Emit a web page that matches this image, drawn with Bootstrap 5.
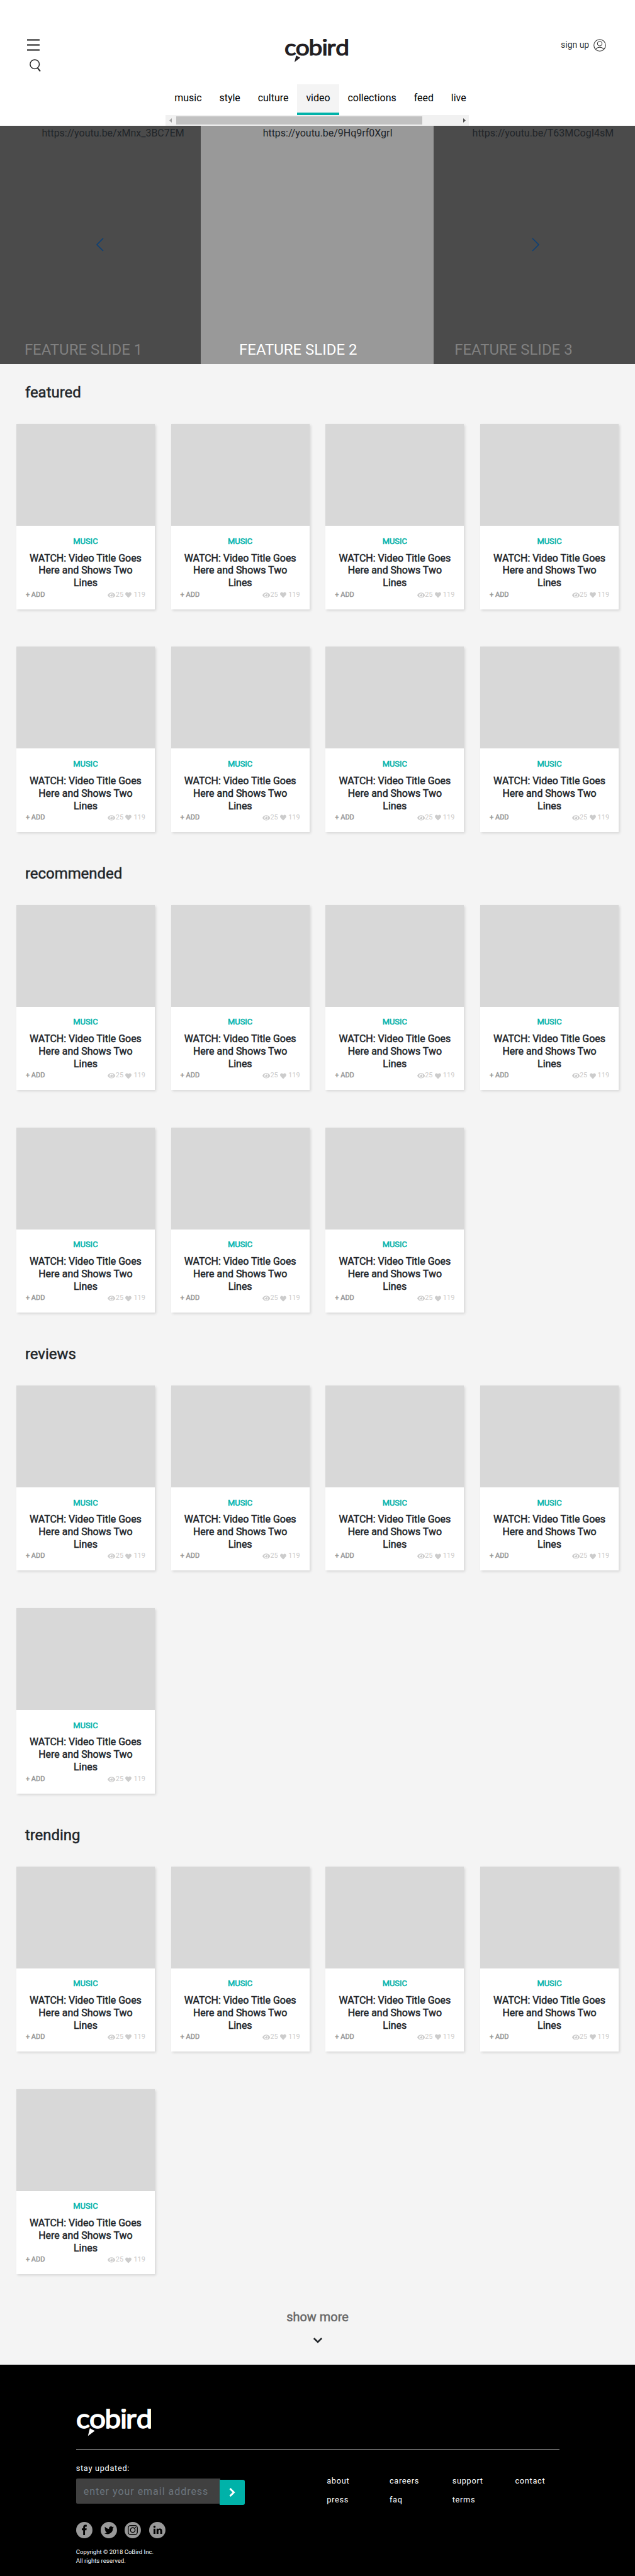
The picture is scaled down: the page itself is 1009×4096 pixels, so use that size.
<!DOCTYPE html>
<html lang="en">
<head>
<meta charset="utf-8">
<meta name="viewport" content="width=device-width, initial-scale=1">
<title>cobird - video</title>
<link href="https://cdn.jsdelivr.net/npm/bootstrap@5.3.0/dist/css/bootstrap.min.css" rel="stylesheet">
<style>
  html { overflow: hidden; background: #000; }
  body { zoom: .99757; font-family: Roboto, sans-serif; color: #212529; background: #f4f4f4; height: 4106px; overflow: hidden; }
  svg { display: block; flex: none; }
  .site-head { height: 200px; }
  .head-row { height: 134px; padding: 62px 46px 0 43px; }
  .head-side { width: 200px; }
  .search-ico { margin: 12px 0 0 4px; }
  .signup { font-size: 14px; line-height: 18px; color: #333; gap: 7px; }
  .brand { font-family: Lato, sans-serif; font-weight: 400; font-size: 35.5px; stroke-width: 1.2; stroke-linejoin: round; }
  .tabs-strip { width: 483px; margin-left: 264px; }
  .tabs-strip .nav-link { color: #000; font-size: 16px; line-height: 20px; padding: 12px 14px; height: 49px; border-radius: 0; }
  .tabs-strip .nav-link.active { background: #f4f4f4; border-bottom: 5px solid #00b2a9; }
  .fake-scroll { height: 17px; background: #f1f1f1; }
  .fake-thumb { width: 392px; height: 13px; background: #c1c1c1; }
  .slides { height: 380px; background: #4b4b4b; }
  .slide-a { width: 320px; } .slide-b { width: 371px; background: #999; } .slide-c { width: 320px; }
  .slide-url { font-size: 16px; line-height: 24px; color: #212529; }
  .slide-a .slide-url { padding-left: 40px; } .slide-b .slide-url { padding-left: 33px; } .slide-c .slide-url { padding-left: 28px; }
  .slide-name { font-size: 24px; line-height: 28px; color: #808080; margin-bottom: 8px; }
  .slide-a .slide-name { padding-left: 39px; } .slide-b .slide-name { padding-left: 61px; color: #fff; } .slide-c .slide-name { padding-left: 33px; }
  .arrow { margin-top: 12px; }
  .slide-a .arrow { margin-left: 152px; } .slide-c .arrow { margin-left: 155px; }
  .shelf { padding: 33px 26px 20.33px; }
  .heavy { font-weight: 400; -webkit-text-stroke: .5px currentColor; }
  .shelf h2 { font-size: 24px; line-height: 28px; margin: 0 0 35px 14px; }
  .tiles { display: grid; grid-template-columns: repeat(4, 220.5px); column-gap: 25.83px; row-gap: 60px; }
  .tile { height: 295px; background: #fff; box-shadow: 2px 2px 4px rgba(0,0,0,.12); }
  .tile-pic { height: 162.4px; background: #d8d8d8; }
  .tile-body { padding: 16.6px 15px 0; }
  .tile-tag { font-size: 13px; line-height: 16px; color: #00b2a9; margin-bottom: 8.7px; }
  .tile-title { font-size: 16px; line-height: 20px; margin: 0; }
  .tile-foot { font-size: 11px; line-height: 13px; margin-top: 2.3px; color: #ccc; }
  .tile-add { color: #999; }
  .tile-heart { margin: 0 3px 0 3.4px; }
  .show-more { padding-top: 36.5px; height: 124px; }
  .show-more span { font-size: 20px; line-height: 24px; color: #666; }
  .show-more svg { margin-top: 19px; }
  .site-foot { background: #000; color: #fff; padding: 70px 120px 0 121px; height: 337px; }
  .foot-rule { height: 1px; background: #999; margin: 19px 0 22px; }
  .foot-left { width: 399.5px; }
  .stay { font-size: 12.8px; line-height: 16px; letter-spacing: .7px; margin-bottom: 9px; }
  .mail-box { width: 230px; height: 40px; background: #404040; border: 0; border-radius: 2px 0 0 2px; padding: 0 12px; color: #fff; letter-spacing: 1px; font-size: 16px; }
  .mail-box::placeholder { color: #6c757d; opacity: 1; }
  .mail-go { width: 40px; height: 40px; background: #00b2a9; border: 0; border-radius: 0 3px 3px 0; padding: 0; margin: 2px 0 0 -1px; }
  .socials { gap: 13px; margin-top: 27px; }
  .legal { font-size: 9.6px; line-height: 14px; margin-top: 15px; }
  .foot-links { display: grid; grid-template-columns: repeat(4, 100px); grid-auto-rows: 30px; padding-top: 13.6px; font-size: 12.8px; line-height: 30px; letter-spacing: .7px; width: 370px; }
  .foot-links a { color: #fff; text-decoration: none; }
</style>
<script src="https://cdn.jsdelivr.net/npm/bootstrap@5.3.0/dist/js/bootstrap.bundle.min.js"></script>
</head>
<body>
<svg width="0" height="0" class="position-absolute" aria-hidden="true">
  <symbol id="eye" viewBox="0 0 576 512">
    <path fill="currentColor" d="M572.500 241.400C518.300 135.600 410.900 64 288 64S57.700 135.600 3.500 241.400a32.400 32.400 0 0 0 0 29.200C57.700 376.400 165.100 448 288 448s230.300-71.600 284.500-177.400a32.400 32.400 0 0 0 0-29.200zM288 400a144 144 0 1 1 144-144 143.900 143.900 0 0 1-144 144zm0-240a95.300 95.300 0 0 0-25.300 3.800 47.900 47.900 0 0 1-66.900 66.900A95.800 95.800 0 1 0 288 160z"/>
  </symbol>
  <symbol id="heart" viewBox="0 0 512 512">
    <path fill="currentColor" d="M462.300 62.600C407.500 15.900 326 24.300 275.700 76.200L256 96.500l-19.700-20.300C186.100 24.300 104.500 15.900 49.700 62.600c-62.800 53.600-66.100 149.800-9.900 207.900l193.500 199.800c12.500 12.900 32.800 12.900 45.300 0l193.500-199.800c56.300-58.100 53-154.300-9.800-207.900z"/>
  </symbol>
</svg>

<header class="site-head bg-white">
  <div class="head-row d-flex justify-content-between align-items-start">
    <div class="head-side">
      <svg width="20" height="20" viewBox="0 0 20 20" stroke="#111" stroke-width="2"><path d="M0 1.500h20M0 9.500h20M0 17.500h20"/></svg>
      <svg class="search-ico" width="19" height="22" viewBox="0 0 19 22" fill="none" stroke="#222" stroke-width="1.500"><circle cx="8.200" cy="8.200" r="7.300"/><path d="M12.600 14l4.400 5.400" stroke-width="2"/></svg>
    </div>
    <svg width="102" height="38" viewBox="-1 0 102 38" color="#231f24">
      <text class="brand" transform="scale(1.1 1)" x="-1 15.300 34.300 53.400 60.300 73.200" y="26.400" fill="currentColor" stroke="currentColor">cobird</text>
      <path d="M17.600 26.200 24.200 29.900 15 36.800Z" fill="currentColor"/>
    </svg>
    <div class="head-side signup d-flex justify-content-end align-items-center">
      <span>sign up</span>
      <svg width="20" height="20" viewBox="0 0 20 20" fill="none" stroke="#333" stroke-width="1.100"><circle cx="10" cy="10" r="9.300"/><circle cx="10" cy="7.400" r="3.600"/><path d="M3.800 16.600C5.500 12.100 14.500 12.100 16.200 16.600"/></svg>
    </div>
  </div>
  <div class="tabs-strip overflow-hidden">
    <nav class="nav flex-nowrap">
      <a class="nav-link" href="#">music</a><a class="nav-link" href="#">style</a><a class="nav-link" href="#">culture</a><a class="nav-link active" href="#">video</a><a class="nav-link" href="#">collections</a><a class="nav-link" href="#">feed</a><a class="nav-link" href="#">live</a>
    </nav>
    <div class="fake-scroll d-flex align-items-center">
      <svg width="17" height="17"><path d="M10 5v7L6 8.500z" fill="#a3a3a3"/></svg>
      <div class="fake-thumb"></div>
      <svg class="ms-auto" width="17" height="17"><path d="M8 5v7l4-3.500z" fill="#505050"/></svg>
    </div>
  </div>
</header>

<section class="slides d-flex">
  <div class="slide-a d-flex flex-column justify-content-between">
    <div class="slide-url text-center">https://youtu.be/xMnx_3BC7EM</div>
    <svg class="arrow" width="14" height="22" fill="none" stroke="#0b4078" stroke-width="1.600"><path d="M12 1 2 11l10 10"/></svg>
    <div class="slide-name">FEATURE SLIDE 1</div>
  </div>
  <div class="slide-b d-flex flex-column justify-content-between">
    <div class="slide-url text-center">https://youtu.be/9Hq9rf0XgrI</div>
    <div class="slide-name">FEATURE SLIDE 2</div>
  </div>
  <div class="slide-c d-flex flex-column justify-content-between">
    <div class="slide-url text-center">https://youtu.be/T63MCogI4sM</div>
    <svg class="arrow" width="14" height="22" fill="none" stroke="#0b4078" stroke-width="1.600"><path d="M2 1l10 10L2 21"/></svg>
    <div class="slide-name">FEATURE SLIDE 3</div>
  </div>
</section>

<main>
  <section class="shelf"><h2 class="heavy">featured</h2><div class="tiles" data-count="8"></div></section>
  <section class="shelf"><h2 class="heavy">recommended</h2><div class="tiles" data-count="7"></div></section>
  <section class="shelf"><h2 class="heavy">reviews</h2><div class="tiles" data-count="5"></div></section>
  <section class="shelf"><h2 class="heavy">trending</h2><div class="tiles" data-count="5"></div></section>
  <div class="show-more d-flex flex-column align-items-center">
    <span class="heavy">show more</span>
    <svg width="16" height="12" fill="none" stroke="#212529" stroke-width="2.600"><path d="M1.800 2 8 8l6.200-6"/></svg>
  </div>
</main>

<footer class="site-foot">
  <svg width="120" height="45" viewBox="-1 0 102 38" color="#fff">
    <text class="brand" transform="scale(1.1 1)" x="-1 15.300 34.300 53.400 60.300 73.200" y="26.400" fill="currentColor" stroke="currentColor">cobird</text>
    <path d="M17.600 26.200 24.200 29.900 15 36.800Z" fill="currentColor"/>
  </svg>
  <div class="foot-rule"></div>
  <div class="d-flex align-items-start">
    <div class="foot-left">
      <div class="stay">stay updated:</div>
      <div class="d-flex align-items-start">
        <input class="mail-box" type="text" placeholder="enter your email address">
        <button class="mail-go d-flex align-items-center justify-content-center" type="button" aria-label="send"><svg width="12" height="16" fill="none" stroke="#fff" stroke-width="3"><path d="M2.500 2l6 6-6 6"/></svg></button>
      </div>
      <div class="socials d-flex">
        <svg width="26" height="26" viewBox="0 0 26 26"><circle cx="13" cy="13" r="13" fill="#999"/><path d="M11.200 21v-7.800H9V10.300h2.200V8.400c0-2.600 1.400-3.900 3.700-3.900.9 0 1.600.1 2 .2v2.700h-1.400c-1.100 0-1.400.6-1.400 1.400v1.500h2.700l-.4 2.900h-2.300V21z"/></svg>
        <svg width="26" height="26" viewBox="0 0 26 26"><circle cx="13" cy="13" r="13" fill="#999"/><path transform="translate(6 5.500) scale(.63)" d="M23.600 4.900c-.9.400-1.800.7-2.800.8 1-.6 1.800-1.600 2.200-2.700-1 .6-2 1-3.100 1.200A4.900 4.900 0 0 0 11.500 8.700C7.400 8.500 3.800 6.600 1.400 3.600.1 5.800.7 8.700 2.900 10.200c-.8 0-1.600-.2-2.200-.6 0 2.300 1.600 4.400 3.900 4.900-.7.200-1.500.2-2.200.1.600 2 2.400 3.400 4.600 3.400A9.900 9.900 0 0 1-.3 20 14 14 0 0 0 21.200 7.500c1-.7 1.800-1.600 2.400-2.600z"/></svg>
        <svg width="26" height="26" viewBox="0 0 26 26" fill="none" stroke="#000" stroke-width="1.400"><circle cx="13" cy="13" r="13" fill="#999" stroke="none"/><rect x="5.700" y="5.700" width="14.600" height="14.600" rx="4"/><circle cx="13" cy="13" r="3.700"/><circle cx="17.400" cy="8.600" r=".9" fill="#000" stroke="none"/></svg>
        <svg class="ms-px" width="26" height="26" viewBox="0 0 26 26"><circle cx="13" cy="13" r="13" fill="#999"/><circle cx="8.500" cy="7.700" r="1.800"/><path d="M7 10.700h3V19H7zM11.800 10.700h2.800v1.200c.5-.9 1.500-1.400 2.700-1.400 2.700 0 3.400 1.700 3.400 4V19h-3v-4c0-1.100-.1-2.200-1.400-2.200-1.200 0-1.500 1-1.500 2.100V19h-3z"/></svg>
      </div>
      <div class="legal">Copyright © 2018 CoBird Inc.<br>All rights reserved.</div>
    </div>
    <div class="foot-links">
      <a href="#">about</a><a href="#">careers</a><a href="#">support</a><a href="#">contact</a>
      <a href="#">press</a><a href="#">faq</a><a href="#">terms</a>
    </div>
  </div>
</footer>

<template id="tile">
  <article class="tile">
    <div class="tile-pic"></div>
    <div class="tile-body text-center">
      <div class="tile-tag heavy">MUSIC</div>
      <h3 class="tile-title heavy">WATCH: Video Title Goes Here and Shows Two Lines</h3>
      <div class="tile-foot d-flex align-items-center">
        <span class="tile-add heavy me-auto">+ ADD</span>
        <svg width="12.400" height="11"><use href="#eye"/></svg><span>25</span>
        <svg class="tile-heart" width="10" height="10"><use href="#heart"/></svg><span>119</span>
      </div>
    </div>
  </article>
</template>
<script>
  const tile = document.getElementById('tile');
  document.querySelectorAll('.tiles').forEach(box => {
    for (let i = 0; i < +box.dataset.count; i++) box.append(tile.content.cloneNode(true));
  });
</script>
</body>
</html>
